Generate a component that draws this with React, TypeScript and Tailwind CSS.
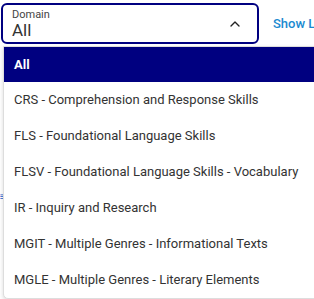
import { ChevronUp } from "lucide-react";

const options = [
  "All",
  "CRS - Comprehension and Response Skills",
  "FLS - Foundational Language Skills",
  "FLSV - Foundational Language Skills - Vocabulary",
  "IR - Inquiry and Research",
  "MGIT - Multiple Genres - Informational Texts",
  "MGLE - Multiple Genres - Literary Elements",
];

export default function App() {
  const selected = "All";

  return (
    <div className="relative h-[299px] w-[314px] overflow-hidden bg-white font-['Roboto',sans-serif] text-[#333]">
      {/* Select + link row */}
      <div className="flex w-[400px] items-center pl-[1px] pt-[3px]">
        <div className="flex h-[41px] w-[258px] shrink-0 items-center justify-between rounded-[6px] border-2 border-[#000080] pl-[9px] pr-[14px]">
          <div className="flex flex-col leading-none">
            <span className="text-[11px] text-[#444]">Domain</span>
            <span className="mt-[2px] text-[17px] text-[#333]">{selected}</span>
          </div>
          <ChevronUp className="h-[16px] w-[16px] text-[#222]" strokeWidth={2} />
        </div>
        <a className="ml-[14px] shrink-0 whitespace-nowrap text-[13px] font-medium text-[#1a8ad0]">
          Show Legend
        </a>
      </div>

      {/* Underlying content peeking out */}
      <div className="absolute left-0 top-[192px] text-[10px] leading-none text-[#1a5fd0]">≡</div>

      {/* Dropdown menu */}
      <div className="absolute left-[3px] top-[46px] w-[330px] overflow-hidden rounded-b-[5px] border border-[#ddd] bg-white shadow-[0_2px_4px_rgba(0,0,0,0.15)]">
        {options.map((opt, i) => (
          <div
            key={opt}
            className={
              i === 0
                ? "flex h-[35px] items-center bg-[#000080] pl-[10px] text-[13px] font-bold text-white"
                : "flex h-[36px] items-center pl-[10px] text-[13px] text-[#333]"
            }
          >
            {opt}
          </div>
        ))}
      </div>
    </div>
  );
}
